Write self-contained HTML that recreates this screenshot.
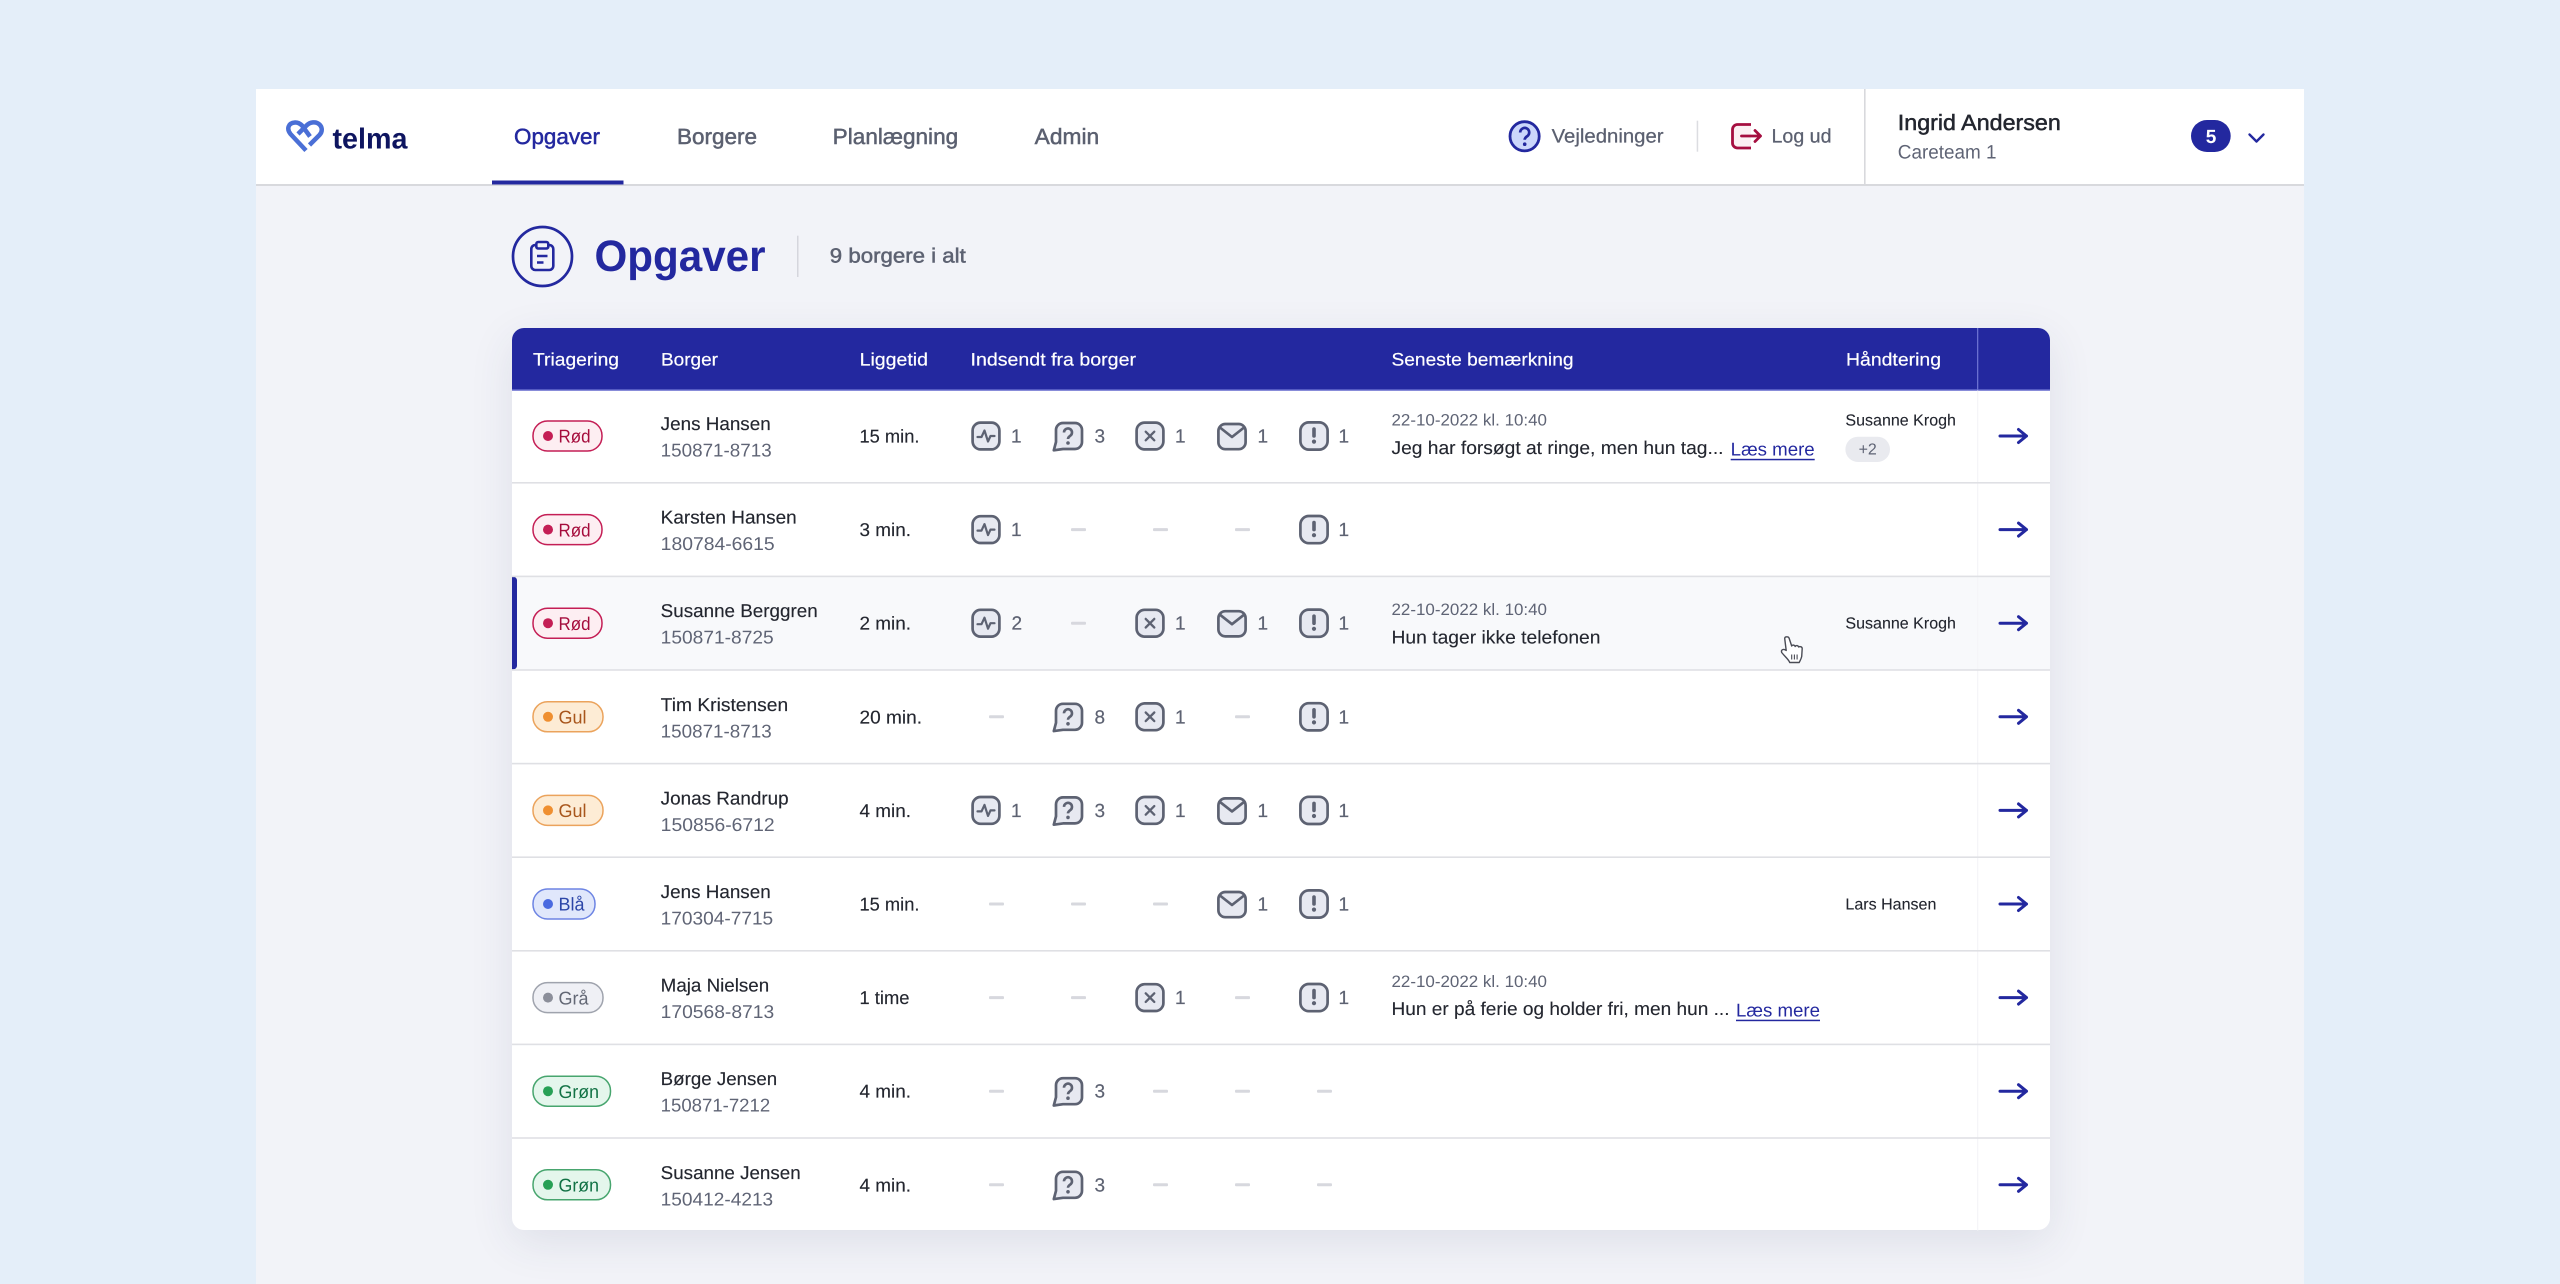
<!DOCTYPE html>
<html lang="da">
<head>
<meta charset="utf-8">
<title>Telma - Opgaver</title>
<style>
html,body{margin:0;padding:0;width:2560px;height:1284px;overflow:hidden;background:#e4eef9;}
#inner{position:absolute;left:256px;top:89px;width:2048px;height:1195px;background:#f2f3f8;}
#top{position:absolute;left:256px;top:89px;width:2048px;height:95px;background:#fff;border-bottom:2px solid #d8d9dd;}
#card{position:absolute;left:512px;top:328px;width:1538px;height:902px;border-radius:12px;background:#fff;box-shadow:0 12px 44px rgba(50,55,100,.10);}
svg#s{position:absolute;left:0;top:0;}
text{font-family:"Liberation Sans",Arial,sans-serif;text-rendering:geometricPrecision;}
.m{stroke:currentColor;stroke-width:.5px;}
.hd{font-size:18px;fill:#fff;stroke:#fff;stroke-width:.2px;}
.n{font-size:18.500px;fill:#23262f;stroke:#23262f;stroke-width:.15px;}
.i{font-size:18.500px;fill:#5f6475;}
.t{font-size:18.500px;fill:#23262f;stroke:#23262f;stroke-width:.15px;}
.c{font-size:19px;fill:#5d6272;stroke:#5d6272;stroke-width:.2px;}
.dt{font-size:16.500px;fill:#5f6475;}
.rm{font-size:18.500px;fill:#23262f;stroke:#23262f;stroke-width:.12px;}
.ln{font-size:18.500px;fill:#23289f;}
.hn{font-size:16px;fill:#23262f;stroke:#23262f;stroke-width:.1px;}
.b{font-size:18.500px;}
</style>
</head>
<body>
<div id="inner"></div>
<div id="top"></div>
<div id="card"></div>
<svg id="s" width="2560" height="1284" viewBox="0 0 2560 1284" xmlns="http://www.w3.org/2000/svg">
<defs>
<g id="a"><rect x="-13.4" y="-13.4" width="26.8" height="26.8" rx="8" fill="#e7e9f1" stroke="#5d6272" stroke-width="2.7"/><path d="M-8.5 1H-4.5L-1.5-5.5L2 5.5L4.5 0H8.5" fill="none" stroke="#5d6272" stroke-width="2.2" stroke-linejoin="round" stroke-linecap="round"/></g>
<g id="q"><path d="M-12-6a7 7 0 0 1 7-7H7a7 7 0 0 1 7 7V6a7 7 0 0 1-7 7H-5L-14.200 14.300L-12 6Z" fill="#e7e9f1" stroke="#5d6272" stroke-width="2.7" stroke-linejoin="round"/><path d="M-4-3.500a4 4 0 1 1 6.200 3.300C.8.800 0 1.400 0 3" fill="none" stroke="#5d6272" stroke-width="2.6"/><circle cx="0" cy="7" r="1.800" fill="#5d6272"/></g>
<g id="x"><rect x="-13.4" y="-13.4" width="26.8" height="26.8" rx="8" fill="#e7e9f1" stroke="#5d6272" stroke-width="2.7"/><path d="M-4.300-4.300L4.300 4.300M4.300-4.300L-4.300 4.300" fill="none" stroke="#5d6272" stroke-width="2.3" stroke-linecap="round"/></g>
<g id="e"><rect x="-13.6" y="-12" width="27.2" height="25.2" rx="7" fill="#e7e9f1" stroke="#5d6272" stroke-width="2.7"/><path d="M-12.700-9L0 1L12.700-9" fill="none" stroke="#5d6272" stroke-width="2.7" stroke-linejoin="round"/></g>
<g id="w"><rect x="-13.6" y="-13.6" width="27.2" height="27.2" rx="8.500" fill="#e7e9f1" stroke="#5d6272" stroke-width="2.7"/><path d="M0-7V0" fill="none" stroke="#5d6272" stroke-width="3.6" stroke-linecap="round"/><circle cx="0" cy="5.600" r="2.100" fill="#5d6272"/></g>
<rect id="d" x="0" y="-1.500" width="15" height="3" rx="1" fill="#d7d8de"/>
<path id="r" d="M2000 0H2026.500M2018.500-6.500L2026.500 0L2018.500 6.500" fill="none" stroke="#23289f" stroke-width="3" stroke-linecap="round" stroke-linejoin="round"/>
</defs>

<!-- logo -->
<g fill="none" stroke="#4a6fd6" stroke-width="4.500" stroke-linejoin="round">
<path d="M306 150.500L290.500 134C286.500 129 288 123 295 122.500C298 122.300 300 123.500 302 125.500L310 136.500"/>
<path d="M298 134L306.500 125.500C310 122 316 121 319.500 124.500C322.500 127.500 322.500 132 319.500 135L309.500 145"/>
</g>
<text x="332.500" y="148.700" font-size="29" font-weight="700" fill="#0e1560" textLength="75" lengthAdjust="spacingAndGlyphs">telma</text>

<!-- nav -->
<g font-size="22">
<text class="m" x="514" y="144" fill="#23289f" color="#23289f" textLength="86" lengthAdjust="spacingAndGlyphs">Opgaver</text>
<text class="m" x="677" y="144" fill="#5b6070" color="#5b6070" textLength="80" lengthAdjust="spacingAndGlyphs">Borgere</text>
<text class="m" x="832.700" y="144" fill="#5b6070" color="#5b6070" textLength="125.500" lengthAdjust="spacingAndGlyphs">Planlægning</text>
<text class="m" x="1034.700" y="144" fill="#5b6070" color="#5b6070" textLength="64.500" lengthAdjust="spacingAndGlyphs">Admin</text>
</g>
<rect x="492" y="180.500" width="131.500" height="4" fill="#23289f"/>

<!-- header right -->
<circle cx="1524.600" cy="136.300" r="14.600" fill="#cbd6fb" stroke="#23289f" stroke-width="2.800"/>
<path d="M1520.200 132.500a4.500 4.500 0 1 1 7 3.700c-1.600 1-2.500 1.800-2.500 3.600" fill="none" stroke="#23289f" stroke-width="2.700"/>
<circle cx="1524.700" cy="144.200" r="1.800" fill="#23289f"/>
<text x="1551.600" y="142.300" font-size="19.500" fill="#5b6070" stroke="#5b6070" stroke-width=".25" textLength="112" lengthAdjust="spacingAndGlyphs">Vejledninger</text>
<rect x="1696.700" y="120.700" width="1.500" height="31" fill="#dcdde1"/>
<path d="M1751 124.500H1737.500a5 5 0 0 0-5 5V143a5 5 0 0 0 5 5H1751" fill="#fbf0f3" stroke="#a50e40" stroke-width="2.800"/>
<path d="M1741.500 136H1760.500M1755 130.500L1760.500 136L1755 141.500" fill="none" stroke="#a50e40" stroke-width="2.800" stroke-linecap="round" stroke-linejoin="round"/>
<text x="1771.500" y="142.300" font-size="19.500" fill="#5b6070" stroke="#5b6070" stroke-width=".25" textLength="60" lengthAdjust="spacingAndGlyphs">Log ud</text>
<rect x="1864" y="89" width="1.600" height="95" fill="#d8d9dd"/>
<text class="m" x="1897.800" y="130" font-size="22" fill="#23262f" color="#23262f" textLength="163" lengthAdjust="spacingAndGlyphs">Ingrid Andersen</text>
<text x="1897.800" y="158.700" font-size="19.500" fill="#5f6475" textLength="98.700" lengthAdjust="spacingAndGlyphs">Careteam 1</text>
<rect x="2191" y="120" width="39.700" height="32" rx="16" fill="#23289f"/>
<text x="2211" y="142.800" font-size="19" font-weight="700" fill="#fff" text-anchor="middle">5</text>
<path d="M2249.500 134.500L2256.500 141.500L2263.500 134.500" fill="none" stroke="#23289f" stroke-width="2.400" stroke-linecap="round" stroke-linejoin="round"/>

<!-- title -->
<circle cx="542.500" cy="256.500" r="29.500" fill="none" stroke="#23289f" stroke-width="2.700"/>
<rect x="531.300" y="245" width="22" height="25" rx="4" fill="none" stroke="#23289f" stroke-width="2.600"/>
<rect x="536.300" y="242" width="12" height="6.500" rx="2" fill="#f2f3f8" stroke="#23289f" stroke-width="2.600"/>
<path d="M537 256H547.500M537 262.500H543.500" fill="none" stroke="#23289f" stroke-width="2.600"/>
<text x="594.500" y="271" font-size="44" font-weight="700" fill="#23289f" textLength="171" lengthAdjust="spacingAndGlyphs">Opgaver</text>
<rect x="797" y="235.700" width="1.500" height="41.300" fill="#d5d6dd"/>
<text class="m" x="829.800" y="262.700" font-size="20.500" fill="#5d6272" color="#5d6272" textLength="136" lengthAdjust="spacingAndGlyphs">9 borgere i alt</text>

<!-- table header -->
<path d="M512 390.500V340a12 12 0 0 1 12-12H2038a12 12 0 0 1 12 12V390.500Z" fill="#23289f"/>
<rect x="512" y="389.300" width="1538" height="1.500" fill="#6a70d0"/>
<rect x="1977" y="328" width="1.300" height="62" fill="#6a70d0"/>
<g>
<text class="hd" x="533" y="365.500" textLength="86" lengthAdjust="spacingAndGlyphs">Triagering</text>
<text class="hd" x="661" y="365.500" textLength="57" lengthAdjust="spacingAndGlyphs">Borger</text>
<text class="hd" x="859.600" y="365.500" textLength="68.400" lengthAdjust="spacingAndGlyphs">Liggetid</text>
<text class="hd" x="970.500" y="365.500" textLength="165.500" lengthAdjust="spacingAndGlyphs">Indsendt fra borger</text>
<text class="hd" x="1391.500" y="365.500" textLength="182" lengthAdjust="spacingAndGlyphs">Seneste bemærkning</text>
<text class="hd" x="1846" y="365.500" textLength="95" lengthAdjust="spacingAndGlyphs">Håndtering</text>
</g>

<!-- highlighted row + separators -->
<rect x="512" y="576.800" width="1538" height="93" fill="#f8f9fb"/>
<rect x="1977" y="390.500" width="1.300" height="840" fill="#f5f5f8"/>
<path d="M512 576.800h1.500a3.500 3.500 0 0 1 3.500 3.500v85.500a3.500 3.500 0 0 1-3.500 3.500H512Z" fill="#23289f"/>
<g fill="#dfe0e4">
<rect x="512" y="482" width="1538" height="1.600"/>
<rect x="512" y="575.600" width="1538" height="1.600"/>
<rect x="512" y="669.200" width="1538" height="1.600"/>
<rect x="512" y="762.800" width="1538" height="1.600"/>
<rect x="512" y="856.400" width="1538" height="1.600"/>
<rect x="512" y="950" width="1538" height="1.600"/>
<rect x="512" y="1043.600" width="1538" height="1.600"/>
<rect x="512" y="1137.200" width="1538" height="1.600"/>
</g>

<!-- row 1 -->
<g transform="translate(0,436)">
<rect x="533" y="-15" width="69" height="30" rx="14.500" fill="#fdeef2" stroke="#c41e55" stroke-width="1.500"/><circle cx="548" cy="0" r="5" fill="#c41e55"/>
<text class="b" x="558.500" y="6.700" fill="#a50c3c" textLength="32" lengthAdjust="spacingAndGlyphs">Rød</text>
<text class="n" x="660.700" y="-6" textLength="110" lengthAdjust="spacingAndGlyphs">Jens Hansen</text>
<text class="i" x="660.700" y="20.500" textLength="111" lengthAdjust="spacingAndGlyphs">150871-8713</text>
<text class="t" x="859.500" y="6.500" textLength="60" lengthAdjust="spacingAndGlyphs">15 min.</text>
<use href="#a" x="986"/><text class="c" x="1011" y="6.500">1</text>
<use href="#q" x="1068"/><text class="c" x="1094.500" y="6.500">3</text>
<use href="#x" x="1150"/><text class="c" x="1175" y="6.500">1</text>
<use href="#e" x="1232"/><text class="c" x="1257.500" y="6.500">1</text>
<use href="#w" x="1314"/><text class="c" x="1338.500" y="6.500">1</text>
<text class="dt" x="1391.500" y="-10.700" textLength="155.500" lengthAdjust="spacingAndGlyphs">22-10-2022 kl. 10:40</text>
<text class="rm" x="1391.500" y="18" textLength="332" lengthAdjust="spacingAndGlyphs">Jeg har forsøgt at ringe, men hun tag...</text>
<text class="ln" x="1730.700" y="19.700" textLength="84" lengthAdjust="spacingAndGlyphs">Læs mere</text><rect x="1730.700" y="22.800" width="84" height="1.500" fill="#23289f"/>
<text class="hn" x="1845.400" y="-10.300" textLength="110.600" lengthAdjust="spacingAndGlyphs">Susanne Krogh</text>
<rect x="1845.400" y="0.700" width="44.600" height="25.300" rx="12.600" fill="#e9eaef"/>
<text x="1867.700" y="18.500" font-size="16" fill="#5f6475" text-anchor="middle">+2</text>
<use href="#r"/>
</g>

<!-- row 2 -->
<g transform="translate(0,529.600)">
<rect x="533" y="-15" width="69" height="30" rx="14.500" fill="#fdeef2" stroke="#c41e55" stroke-width="1.500"/><circle cx="548" cy="0" r="5" fill="#c41e55"/>
<text class="b" x="558.500" y="6.700" fill="#a50c3c" textLength="32" lengthAdjust="spacingAndGlyphs">Rød</text>
<text class="n" x="660.700" y="-6" textLength="136" lengthAdjust="spacingAndGlyphs">Karsten Hansen</text>
<text class="i" x="660.700" y="20.500" textLength="114" lengthAdjust="spacingAndGlyphs">180784-6615</text>
<text class="t" x="859.500" y="6.500" textLength="51.500" lengthAdjust="spacingAndGlyphs">3 min.</text>
<use href="#a" x="986"/><text class="c" x="1011" y="6.500">1</text>
<use href="#d" x="1071"/><use href="#d" x="1153"/><use href="#d" x="1235"/>
<use href="#w" x="1314"/><text class="c" x="1338.500" y="6.500">1</text>
<use href="#r"/>
</g>

<!-- row 3 -->
<g transform="translate(0,623.200)">
<rect x="533" y="-15" width="69" height="30" rx="14.500" fill="#fdeef2" stroke="#c41e55" stroke-width="1.500"/><circle cx="548" cy="0" r="5" fill="#c41e55"/>
<text class="b" x="558.500" y="6.700" fill="#a50c3c" textLength="32" lengthAdjust="spacingAndGlyphs">Rød</text>
<text class="n" x="660.700" y="-6" textLength="157" lengthAdjust="spacingAndGlyphs">Susanne Berggren</text>
<text class="i" x="660.700" y="20.500" textLength="113" lengthAdjust="spacingAndGlyphs">150871-8725</text>
<text class="t" x="859.500" y="6.500" textLength="51.500" lengthAdjust="spacingAndGlyphs">2 min.</text>
<use href="#a" x="986"/><text class="c" x="1011.500" y="6.500">2</text>
<use href="#d" x="1071"/>
<use href="#x" x="1150"/><text class="c" x="1175" y="6.500">1</text>
<use href="#e" x="1232"/><text class="c" x="1257.500" y="6.500">1</text>
<use href="#w" x="1314"/><text class="c" x="1338.500" y="6.500">1</text>
<text class="dt" x="1391.500" y="-8" textLength="155.500" lengthAdjust="spacingAndGlyphs">22-10-2022 kl. 10:40</text>
<text class="rm" x="1391.500" y="20.500" textLength="209" lengthAdjust="spacingAndGlyphs">Hun tager ikke telefonen</text>
<text class="hn" x="1845.400" y="5.500" textLength="110.600" lengthAdjust="spacingAndGlyphs">Susanne Krogh</text>
<use href="#r"/>
</g>

<!-- row 4 -->
<g transform="translate(0,716.800)">
<rect x="533" y="-15" width="70" height="30" rx="14.500" fill="#fdecd5" stroke="#eba35c" stroke-width="1.500"/><circle cx="548" cy="0" r="5" fill="#ef8f30"/>
<text class="b" x="558.500" y="6.700" fill="#a8561c" textLength="28" lengthAdjust="spacingAndGlyphs">Gul</text>
<text class="n" x="660.700" y="-6" textLength="127.500" lengthAdjust="spacingAndGlyphs">Tim Kristensen</text>
<text class="i" x="660.700" y="20.500" textLength="111" lengthAdjust="spacingAndGlyphs">150871-8713</text>
<text class="t" x="859.500" y="6.500" textLength="62.500" lengthAdjust="spacingAndGlyphs">20 min.</text>
<use href="#d" x="989"/>
<use href="#q" x="1068"/><text class="c" x="1094.500" y="6.500">8</text>
<use href="#x" x="1150"/><text class="c" x="1175" y="6.500">1</text>
<use href="#d" x="1235"/>
<use href="#w" x="1314"/><text class="c" x="1338.500" y="6.500">1</text>
<use href="#r"/>
</g>

<!-- row 5 -->
<g transform="translate(0,810.400)">
<rect x="533" y="-15" width="70" height="30" rx="14.500" fill="#fdecd5" stroke="#eba35c" stroke-width="1.500"/><circle cx="548" cy="0" r="5" fill="#ef8f30"/>
<text class="b" x="558.500" y="6.700" fill="#a8561c" textLength="28" lengthAdjust="spacingAndGlyphs">Gul</text>
<text class="n" x="660.700" y="-6" textLength="128" lengthAdjust="spacingAndGlyphs">Jonas Randrup</text>
<text class="i" x="660.700" y="20.500" textLength="114" lengthAdjust="spacingAndGlyphs">150856-6712</text>
<text class="t" x="859.500" y="6.500" textLength="51.500" lengthAdjust="spacingAndGlyphs">4 min.</text>
<use href="#a" x="986"/><text class="c" x="1011" y="6.500">1</text>
<use href="#q" x="1068"/><text class="c" x="1094.500" y="6.500">3</text>
<use href="#x" x="1150"/><text class="c" x="1175" y="6.500">1</text>
<use href="#e" x="1232"/><text class="c" x="1257.500" y="6.500">1</text>
<use href="#w" x="1314"/><text class="c" x="1338.500" y="6.500">1</text>
<use href="#r"/>
</g>

<!-- row 6 -->
<g transform="translate(0,904)">
<rect x="533" y="-15" width="62" height="30" rx="14.500" fill="#e0e7fb" stroke="#6d84e3" stroke-width="1.500"/><circle cx="548" cy="0" r="5" fill="#4a6ae0"/>
<text class="b" x="558.500" y="6.700" fill="#2c46a8" textLength="26" lengthAdjust="spacingAndGlyphs">Blå</text>
<text class="n" x="660.700" y="-6" textLength="110" lengthAdjust="spacingAndGlyphs">Jens Hansen</text>
<text class="i" x="660.700" y="20.500" textLength="112.500" lengthAdjust="spacingAndGlyphs">170304-7715</text>
<text class="t" x="859.500" y="6.500" textLength="60" lengthAdjust="spacingAndGlyphs">15 min.</text>
<use href="#d" x="989"/><use href="#d" x="1071"/><use href="#d" x="1153"/>
<use href="#e" x="1232"/><text class="c" x="1257.500" y="6.500">1</text>
<use href="#w" x="1314"/><text class="c" x="1338.500" y="6.500">1</text>
<text class="hn" x="1845.400" y="5.500" textLength="91" lengthAdjust="spacingAndGlyphs">Lars Hansen</text>
<use href="#r"/>
</g>

<!-- row 7 -->
<g transform="translate(0,997.600)">
<rect x="533" y="-15" width="70" height="30" rx="14.500" fill="#eff0f5" stroke="#9fa3ad" stroke-width="1.500"/><circle cx="548" cy="0" r="5" fill="#8c8f9a"/>
<text class="b" x="558.500" y="6.700" fill="#636875" textLength="30" lengthAdjust="spacingAndGlyphs">Grå</text>
<text class="n" x="660.700" y="-6" textLength="108.500" lengthAdjust="spacingAndGlyphs">Maja Nielsen</text>
<text class="i" x="660.700" y="20.500" textLength="113.500" lengthAdjust="spacingAndGlyphs">170568-8713</text>
<text class="t" x="859.500" y="6.500" textLength="50" lengthAdjust="spacingAndGlyphs">1 time</text>
<use href="#d" x="989"/><use href="#d" x="1071"/>
<use href="#x" x="1150"/><text class="c" x="1175" y="6.500">1</text>
<use href="#d" x="1235"/>
<use href="#w" x="1314"/><text class="c" x="1338.500" y="6.500">1</text>
<text class="dt" x="1391.500" y="-10.600" textLength="155.500" lengthAdjust="spacingAndGlyphs">22-10-2022 kl. 10:40</text>
<text class="rm" x="1391.500" y="17.400" textLength="338" lengthAdjust="spacingAndGlyphs">Hun er på ferie og holder fri, men hun ...</text>
<text class="ln" x="1736" y="19" textLength="84" lengthAdjust="spacingAndGlyphs">Læs mere</text><rect x="1736" y="22.100" width="84" height="1.500" fill="#23289f"/>
<use href="#r"/>
</g>

<!-- row 8 -->
<g transform="translate(0,1091.200)">
<rect x="533" y="-15" width="77.500" height="30" rx="14.500" fill="#e4f6ec" stroke="#47a56e" stroke-width="1.500"/><circle cx="548" cy="0" r="5" fill="#27a055"/>
<text class="b" x="558.500" y="6.700" fill="#127245" textLength="40.500" lengthAdjust="spacingAndGlyphs">Grøn</text>
<text class="n" x="660.700" y="-6" textLength="116.500" lengthAdjust="spacingAndGlyphs">Børge Jensen</text>
<text class="i" x="660.700" y="20.500" textLength="109.500" lengthAdjust="spacingAndGlyphs">150871-7212</text>
<text class="t" x="859.500" y="6.500" textLength="51.500" lengthAdjust="spacingAndGlyphs">4 min.</text>
<use href="#d" x="989"/>
<use href="#q" x="1068"/><text class="c" x="1094.500" y="6.500">3</text>
<use href="#d" x="1153"/><use href="#d" x="1235"/><use href="#d" x="1317"/>
<use href="#r"/>
</g>

<!-- row 9 -->
<g transform="translate(0,1184.800)">
<rect x="533" y="-15" width="77.500" height="30" rx="14.500" fill="#e4f6ec" stroke="#47a56e" stroke-width="1.500"/><circle cx="548" cy="0" r="5" fill="#27a055"/>
<text class="b" x="558.500" y="6.700" fill="#127245" textLength="40.500" lengthAdjust="spacingAndGlyphs">Grøn</text>
<text class="n" x="660.700" y="-6" textLength="140" lengthAdjust="spacingAndGlyphs">Susanne Jensen</text>
<text class="i" x="660.700" y="20.500" textLength="112.500" lengthAdjust="spacingAndGlyphs">150412-4213</text>
<text class="t" x="859.500" y="6.500" textLength="51.500" lengthAdjust="spacingAndGlyphs">4 min.</text>
<use href="#d" x="989"/>
<use href="#q" x="1068"/><text class="c" x="1094.500" y="6.500">3</text>
<use href="#d" x="1153"/><use href="#d" x="1235"/><use href="#d" x="1317"/>
<use href="#r"/>
</g>

<!-- cursor -->
<g transform="translate(1791.700,649.500)">
<path d="M-7-11c0-2.200 4-2.200 4.500 0L0-3.500c1-1.500 3-1 3.500.5c1-1.500 3-1 3.500.5c1.500-1 3.500 0 3.500 1.500L10 7C9.300 10 8.300 11 7.500 13H-2C-3 10-6 8-10 3C-11 0-8-1-5.500 1Z" fill="#fff" stroke="#4a4c55" stroke-width="1.400" stroke-linejoin="round"/>
<path d="M0 5V10M2.700 5V10M5.400 5V10" fill="none" stroke="#4a4c55" stroke-width="1.100"/>
</g>
</svg>
</body>
</html>
